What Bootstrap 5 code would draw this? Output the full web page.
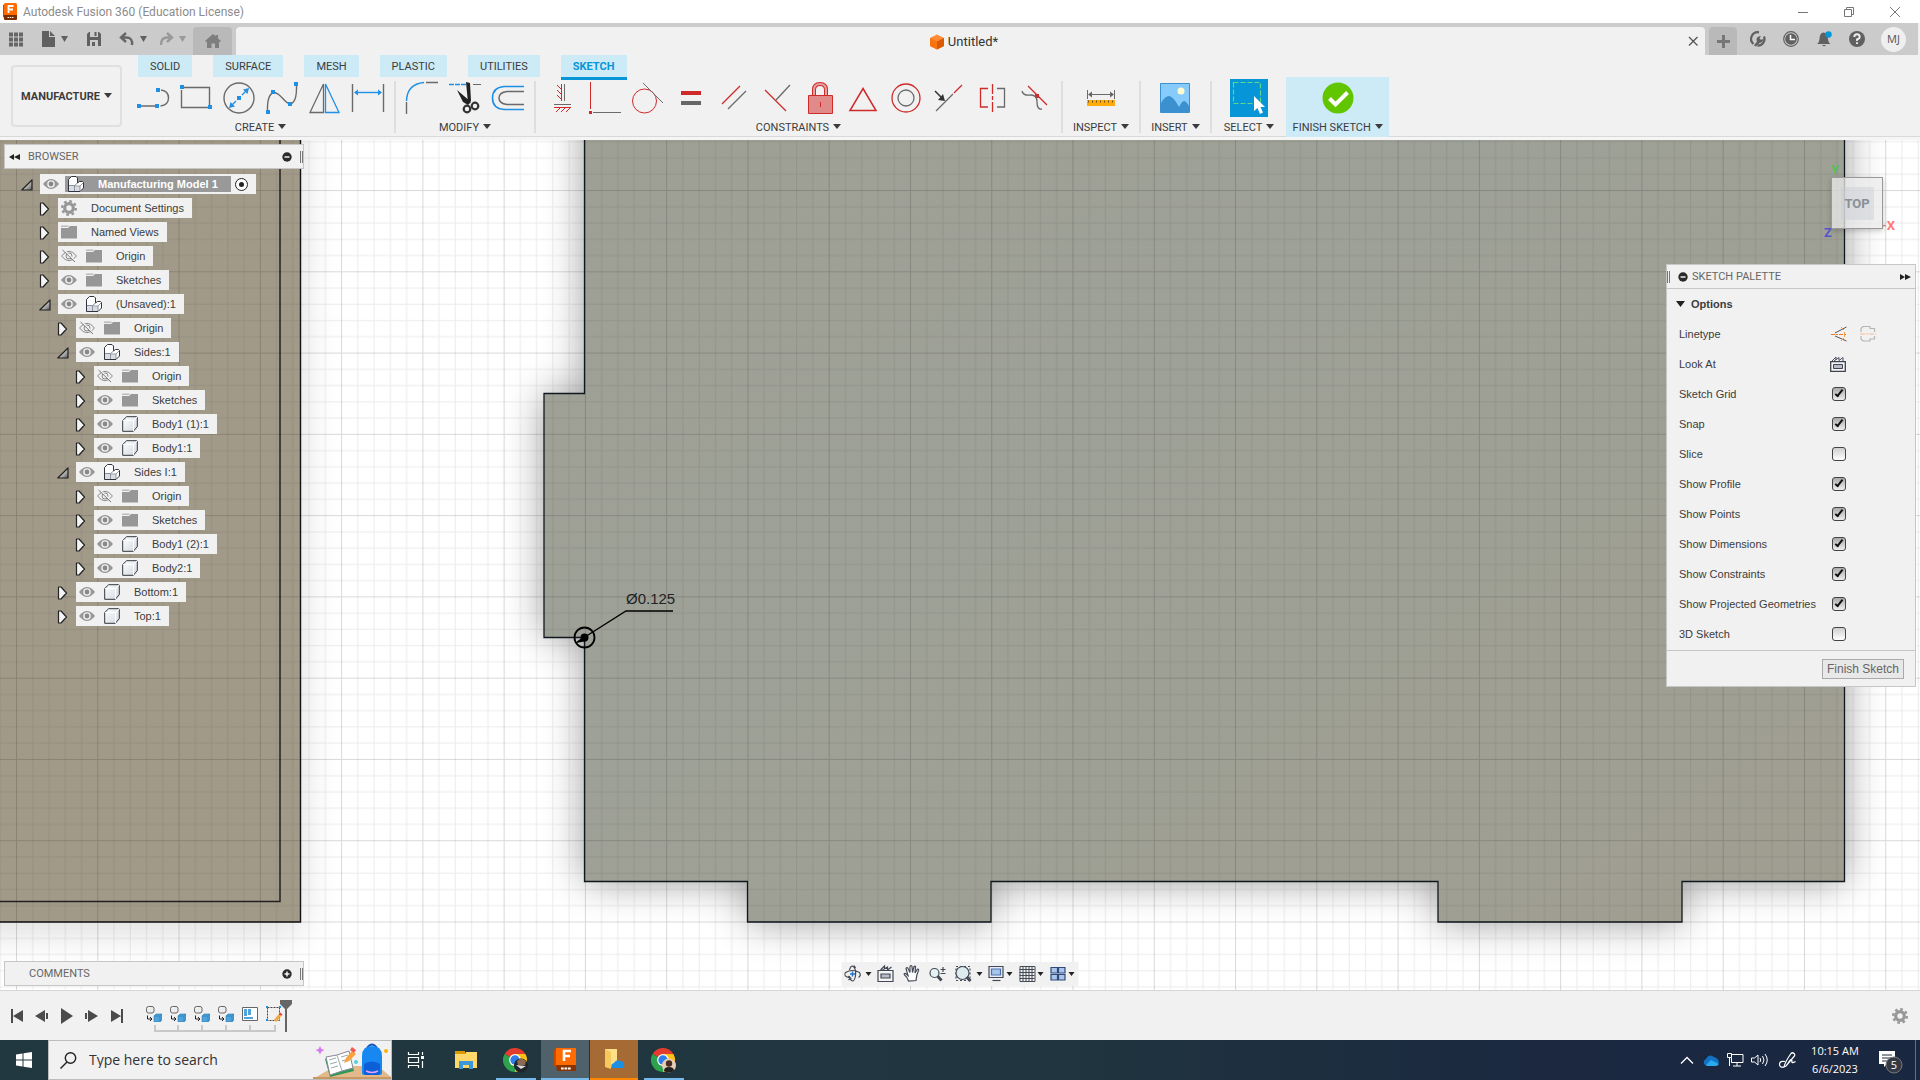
<!DOCTYPE html>
<html lang="en">
<head>
<meta charset="utf-8">
<meta name="viewport" content="width=device-width, initial-scale=1">
<title>Autodesk Fusion 360 (Education License)</title>
<link href="https://cdn.jsdelivr.net/npm/bootstrap@5.3.0/dist/css/bootstrap.min.css" rel="stylesheet">
<style>
  :root { --panel:#f1f1f1; --ink:#3c3c3c; --tint:#cdeaf7; --blue:#0696d7; --rule:#cbcbcb; }
  body { font-family:Roboto,"Liberation Sans",sans-serif; font-size:11px; line-height:16px; color:var(--ink); background:var(--panel); }
  svg { display:block; flex:none; overflow:visible; }
  button { background:none; border:0; padding:0; color:inherit; }
  .k { fill:none; stroke:#6a6a6a; } .b { fill:none; stroke:#1e90e6; } .r { fill:none; stroke:#cf2a2a; }
  .bf { fill:#1e90e6; } .rf { fill:#cf2a2a; }

  .titlebar { height:23px; background:#fff; color:#8c8c8c; font-size:12px; padding-left:3px; padding-right:2px; }
  .titlebar .apptitle { padding-left:5px; }
  .winbtn { width:46px; height:23px; }
  .tabbar { height:32px; background:var(--rule); margin-right:2px; color:#606060; }
  .quick { width:193px; }
  .hometab, .addtab { background:#b9b9b9; height:28px; border-radius:4px 4px 0 0; }
  .hometab { width:39px; } .addtab { width:28px; }
  .doctab { height:28px; background:var(--panel); border-radius:4px 4px 0 0; font-size:13px; color:#333; padding-top:1px; }
  .roundbtn { width:33px; height:32px; }
  .avatar { width:25px; height:25px; border-radius:50%; background:#efefef; color:#555; font-family:"Open Sans",sans-serif; font-size:11px; }

  .ribbon { height:82px; border-bottom:1px solid #d9d9d9; }
  .workspace { width:111px; height:62px; margin:10px 15px 0 11px; padding-top:1px; border:2px solid #e0e0e0; border-radius:4px; font-size:11px; font-weight:700; }
  .rtabs { gap:21px; height:22px; padding-left:1px; }
  .rtab { background:var(--tint); height:22px; padding:0 12px; color:var(--ink); text-decoration:none; line-height:23px; }
  .rtab.on { height:25px; color:var(--blue); font-weight:700; border-bottom:3px solid var(--blue); }
  .tgroup { height:59px; padding:0 10px; }
  .tgroup.wide { padding:0 12px; }
  .tools { height:42px; gap:11px; }
  .glabel { display:block; line-height:18px; text-align:center; }
  .divide { border-right:2px solid #dedede; height:52px; margin-top:4px; }
  .caret { display:inline-block; border:4px solid transparent; border-top:5px solid currentColor; border-bottom:0; margin-left:4px; vertical-align:2px; }
  .finish { width:103px; background:var(--tint); }

  .stage { background:#fff; border-top:3px solid #f5f5f5; border-bottom:1px solid #d6d6d6; }
  .pane { background:var(--panel); border:1px solid #c6c6c6; }
  .bar { height:25px; width:300px; color:#666; font-size:11px; }
  .leftdock { top:4px; left:4px; }
  .grip { width:3px; height:12px; border-left:1px solid #777; border-right:1px solid #777; }

  .tree { font-family:"Liberation Sans",sans-serif; font-size:11px; margin:5px 0 0 17px; }
  .tree ul { padding-left:18px; list-style:none; margin:0; }
  .tree .line { height:24px; gap:7px; }
  .node { background:var(--panel); height:20px; padding:0 8px 0 3px; gap:9px; }
  .node .cap { padding-left:5px; }
  .node .pick { background:#999; height:16px; color:#fff; font-weight:700; gap:14px; padding:0 13px 0 3px; margin-left:-3px; margin-right:-5px; }

  .cube { top:37px; right:37px; width:52px; height:52px; background:rgba(235,235,235,.75); border:1px solid #999; color:#8a8f94; font:700 13px/16px Roboto,sans-serif; box-shadow:0 2px 5px rgba(0,0,0,.2); padding-top:1px; }
  .cube .face { width:33px; height:33px; background:rgba(200,205,212,.45); }
  .axis { font:700 13px/14px Roboto,sans-serif; }
  .axis-y { top:23px; right:81px; color:#54c254; } .axis-z { top:86px; right:88px; color:#5454cc; } .axis-x { top:79px; right:25px; color:#f77; }

  .palette { top:124px; right:4px; width:250px; font-family:"Liberation Sans",sans-serif; border-width:1px; }
  .palette .bar { width:auto; height:24px; border-bottom:1px solid #c6c6c6; font-family:Roboto,sans-serif; }
  .phead { height:30px; padding-left:9px; gap:6px; }
  .opt { height:30px; padding-left:12px; padding-right:69px; }
  .opt.pair { padding-right:39px; }
  .opt input { appearance:none; width:14px; height:14px; margin:0; border:1px solid #444; border-radius:3px; background:linear-gradient(#cfcfcf,#fff); position:relative; }
  .opt input:checked { background:linear-gradient(#aaa,#eee); }
  .opt input:checked::after { content:""; position:absolute; left:4px; top:0; width:4px; height:9px; border:solid #111; border-width:0 2px 2px 0; transform:rotate(38deg); }
  .pfoot { border-top:1px solid #c6c6c6; height:36px; margin-top:1px; padding-right:11px; padding-top:1px; }
  .pbtn { border:1px solid #aaa; background:#e8e8e8; height:20px; width:82px; color:#666; font-size:12px; line-height:18px; }

  .navbarbox { bottom:4px; background:var(--panel); height:24px; width:237px; padding:0 3px; }
  .timeline { height:49px; }
  .play button { width:25px; height:24px; }
  .taskbar { height:40px; background:linear-gradient(90deg,#213840,#20353f 55%,#1b2840 80%,#1a2740); color:#fff; font-family:"Open Sans",sans-serif; }
  .start { width:48px; }
  .search { width:344px; background:var(--panel); border:1px solid #bdbdbd; padding-left:11px; }
  .search input { border:0; background:none; outline:0; font-size:14px; color:#333; width:180px; padding:0; }
  .search input::placeholder { color:#333; opacity:1; }
  .app { width:48px; height:40px; margin-left:1px; }
  .app.apart { margin-left:2px; }
  .app.first { margin-left:0; }
  .app.run { background:linear-gradient(#76b9ed,#76b9ed) center bottom/40px 2px no-repeat; }
  .app.active { background:#4f626b; border-bottom:2px solid #76b9ed; }
  .app.alert-tile { background:#a66a35; border-bottom:2px solid #f80; }
  .tray button { width:24px; height:40px; }
  .tray .notes { width:26px; margin-left:6px; margin-right:12px; }
  .clock { width:72px; font-size:11px; line-height:18px; }
  .edge { width:5px; border-left:1px solid #68717f; }
</style>
<script src="https://cdn.jsdelivr.net/npm/bootstrap@5.3.0/dist/js/bootstrap.bundle.min.js"></script>
</head>
<body class="vh-100 d-flex flex-column overflow-hidden">

<svg width="0" height="0" class="position-absolute" aria-hidden="true">
  <defs>
    <linearGradient id="gTri" x1="0" y1="0" x2="1" y2="1"><stop offset=".4" stop-color="#ddd"/><stop offset="1" stop-color="#555"/></linearGradient>
    <linearGradient id="gBox" x1="0" y1="0" x2="1" y2="1"><stop offset="0" stop-color="#fff"/><stop offset="1" stop-color="#d4d7de"/></linearGradient>
    <symbol id="eye" viewBox="0 0 16 16"><path d="M0 8Q8-2 16 8Q8 18 0 8z" fill="#979797"/><circle cx="8" cy="8" r="3.8" fill="#f1f1f1"/><circle cx="8" cy="8" r="2.4" fill="#888"/></symbol>
    <symbol id="eyeoff" viewBox="0 0 16 16"><path d="M.5 8Q8-1.500 15.500 8Q8 17.500 .5 8z" fill="none" stroke="#888"/><circle cx="8" cy="8" r="3" fill="none" stroke="#888"/><path d="M2.500 1.500l12 12" stroke="#f1f1f1" stroke-width="1.500"/><path d="M1.500 2l12.500 12" stroke="#777"/></symbol>
    <symbol id="folder" viewBox="0 0 16 16"><path d="M0 1.500h8l-1 1.500H0z" fill="#bbb"/><path d="M0 4h7l2-2h7v12.500H0z" fill="#979797"/></symbol>
    <symbol id="comp" viewBox="0 0 16 16"><path d="M.5 3.500L3.500.5H8L9.500 2v5L11.500 5.500h3l1 1v5.500l-3.500 3.500H.5z" fill="#fff" stroke="#2f3540" stroke-linejoin="round"/><path d="M1 9h5.500v6H1zM7 10.500h5V15H7z" fill="#d9dce3"/><path d="M6.500 15V9.500L9.500 7M1 9.500h5.500M6.500 10h5.500v5M12 10l3-3" fill="none" stroke="#777e8b" stroke-width=".8"/></symbol>
    <symbol id="body" viewBox="0 0 16 16"><path d="M.7 4.500l4-3.800h9.600q1 0 1 1v9l-4 4.600H.7z" fill="url(#gBox)" stroke="#2f3540" stroke-linejoin="round"/><path d="M11.500 15V4.500L15 1M1 4.500h10.500" fill="none" stroke="#fff"/></symbol>
    <symbol id="gear" viewBox="0 0 16 16"><circle cx="8" cy="8" r="4.300" fill="none" stroke="#979797" stroke-width="3.200"/><circle cx="8" cy="8" r="6.800" fill="none" stroke="#979797" stroke-width="2.400" stroke-dasharray="2.670 2.670"/></symbol>
    <symbol id="shut" viewBox="0 0 12 14"><path d="M1.500 1v12h2.500l5.500-6-5.500-6z" fill="#f4f4f4" stroke="#222" stroke-width="1.200" stroke-linejoin="round"/></symbol>
    <symbol id="open" viewBox="0 0 12 14"><path d="M11 2v10H.8z" fill="url(#gTri)" stroke="#222" stroke-width="1.200" stroke-linejoin="round"/></symbol>
    <symbol id="lookat" viewBox="0 0 16 16"><path d="M2 5l4-4v3M4 5l5-3.500v3l4-3V5" fill="none" stroke="#4a4f5c"/><path d="M.7 5.700h14.600v9.600H.7z" fill="#f6f6f6" stroke="#3f4450" stroke-width="1.300"/><path d="M3.500 8.500h9v4h-9z" fill="#b8bcc8" stroke="#3f4450"/></symbol>
    <symbol id="feat" viewBox="0 0 16 16"><path d="M.5 2.500Q.5.500 2.500.5H6q2 0 2 2V5q0 2-2 2H2.500q-2 0-2-2z" fill="#eee" stroke="#666"/><path d="M1.500 9.500v3.500H6M4 11l2 2-2 2" fill="none" stroke="#222"/><path d="M8 10l2-2h6v6l-2 2H8z" fill="#4ea3dc" stroke="#2a7bb5" stroke-width=".6"/><path d="M8 10h6v6M14 10l2-2" fill="none" stroke="#2a7bb5" stroke-width=".6"/></symbol>
    <symbol id="chrome" viewBox="0 0 24 24"><path d="M12 12L1.600 6A12 12 0 0 1 22.400 6z" fill="#e33b2e"/><path d="M12 12L22.400 6A12 12 0 0 1 12 24z" fill="#fbc116"/><path d="M12 12v12A12 12 0 0 1 1.600 6z" fill="#2da14b"/><path d="M12 6h10.400l-4 6z" fill="#fbc116"/><circle cx="12" cy="12" r="5.900" fill="#fff"/><circle cx="12" cy="12" r="4.700" fill="#2e7de9"/></symbol>
    <symbol id="minus" viewBox="0 0 10 10"><circle cx="5" cy="5" r="4.700" fill="#2b2b2b"/><path d="M2.500 5h5" stroke="#fff" stroke-width="1.400"/></symbol>
  </defs>
</svg>

<header>
  <div class="titlebar d-flex align-items-center">
    <svg width="15" height="18" viewBox="0 0 15 18"><path d="M0 2l3-2v16l-3-2z" fill="#c94a00"/><rect x="1" width="13" height="14" rx="1.500" fill="#ff6b00"/><path d="M1 12h13v4q0 1-1 1H2q-1 0-1-1z" fill="#7a2d00"/><path d="M5.500 10V3h5M5.500 6.500H10" fill="none" stroke="#fff" stroke-width="1.800"/><path d="M4.500 14.500h6" stroke="#fff" stroke-dasharray="1.500 .7"/></svg>
    <span class="apptitle flex-grow-1">Autodesk Fusion 360 (Education License)</span>
    <button class="winbtn d-flex align-items-center justify-content-center" aria-label="Minimize"><svg width="10" height="10"><path d="M0 5.500h10" stroke="#777"/></svg></button>
    <button class="winbtn d-flex align-items-center justify-content-center" aria-label="Restore"><svg width="10" height="10"><path d="M.5 2.500h7v7h-7zM2.500 2.500v-2h7v7h-2" fill="none" stroke="#777"/></svg></button>
    <button class="winbtn d-flex align-items-center justify-content-center" aria-label="Close"><svg width="10" height="10"><path d="M0 0l10 10M10 0L0 10" stroke="#777"/></svg></button>
  </div>

  <div class="tabbar d-flex align-items-end">
    <div class="quick">
      <svg width="193" height="32" viewBox="0 23 193 32" role="img" aria-label="Data panel, File, Save, Undo, Redo">
        <path d="M9 34.500h14M9 39.500h14M9 44.500h14" stroke="#666" stroke-width="4" stroke-dasharray="4 1"/>
        <path d="M42 31h7v6h6v10H42zM50 31l5 5h-5z" fill="#606060"/><path d="M61 36h7l-3.500 6z" fill="#606060"/>
        <path d="M87 34l2-2h10l2 2v12H87z" fill="#606060"/><path d="M90 32h8v5h-8zM90 40h8v6h-8z" fill="#cbcbcb"/><path d="M94.500 32h2v4h-2zM92 42h3v4h-3z" fill="#606060"/>
        <path d="M126 33l-5 4.500 5 4.500M121 37.500h5q7 0 6 7.500" fill="none" stroke="#666" stroke-width="2.400"/><path d="M140 36h7l-3.500 6z" fill="#606060"/>
        <path d="M167 33l5 4.500-5 4.500M172 37.500h-5q-6 0-6 7.500" fill="none" stroke="#999" stroke-width="2.400"/><path d="M179 36h7l-3.500 6z" fill="#999"/>
      </svg>
    </div>
    <button class="hometab d-flex align-items-center justify-content-center me-1" aria-label="Home"><svg width="16" height="14"><path d="M0 7l8-7 2.500 2.300V1H13v3.500L16 7l-1 1-1-.6V14h-4V9.500H6.500V14H2V7.400L1 8z" fill="#7e7e7e"/></svg></button>
    <div class="doctab flex-grow-1 d-flex align-items-center me-1">
      <div class="flex-grow-1 d-flex justify-content-center align-items-center gap-1 ps-2">
        <svg width="14" height="16" viewBox="0 0 14 15"><path d="M7 0l7 3.500v8L7 15l-7-3.500v-8z" fill="#ff8a36"/><path d="M0 3.500L7 7v8l-7-3.500z" fill="#f9730f"/><path d="M14 3.500L7 7v8l7-3.500z" fill="#d95a00"/></svg>
        <span>Untitled*</span>
      </div>
      <button class="px-1" aria-label="Close tab"><svg width="13" height="9"><path d="M1 0l8.500 8.500M9.500 0L1 8.500" stroke="#555" stroke-width="1.300"/></svg></button>
    </div>
    <button class="addtab d-flex align-items-center justify-content-center" aria-label="New tab"><svg width="13" height="13"><path d="M6.500 0v13M0 6.500h13" stroke="#777" stroke-width="3"/></svg></button>
    <div class="d-flex align-items-center ps-1">
      <button class="roundbtn d-flex align-items-center justify-content-center" aria-label="Extensions"><svg width="16" height="16"><path d="M3.500 13A6.700 6.700 0 0 1 9 1.300M14 5.500A6.700 6.700 0 0 1 7.500 14.700" fill="none" stroke="#606060" stroke-width="2.200"/><path d="M4 14.500L7 10.500Q5.500 7 8.500 5.500L11 5 9.500 7.200 10.800 8.700 13.500 8Q13 11.500 9.500 12L6 15.500z" fill="#606060"/></svg></button>
      <button class="roundbtn d-flex align-items-center justify-content-center" aria-label="Job status"><svg width="16" height="16"><circle cx="8" cy="8" r="7.300" fill="none" stroke="#606060" stroke-width="1.200"/><circle cx="8" cy="8" r="5.800" fill="#606060"/><path d="M7.500 4v4.500H12" fill="none" stroke="#fff" stroke-width="1.500"/></svg></button>
      <button class="roundbtn d-flex align-items-center justify-content-center" aria-label="Notifications"><svg width="16" height="16"><path d="M1 13q2-1 2.500-5 0-6 4-6.500Q12 2 12 8q.5 4 2.500 5zM6 14h4q-2 2.500-4 0z" fill="#606060"/><circle cx="12.500" cy="3.500" r="3.200" fill="#0696d7"/></svg></button>
      <button class="roundbtn d-flex align-items-center justify-content-center" aria-label="Help"><svg width="16" height="16"><circle cx="8" cy="8" r="8" fill="#606060"/><path d="M5.300 6q0-2.700 2.700-2.700T10.700 6Q10.700 7.500 8 8.500V10M8 11.300v1.800" fill="none" stroke="#eee" stroke-width="1.900"/></svg></button>
      <button class="avatar ms-2 me-2 d-flex align-items-center justify-content-center" aria-label="Account">MJ</button>
      <span class="pe-1"></span>
    </div>
  </div>

  <div class="ribbon d-flex">
    <button class="workspace flex-shrink-0">MANUFACTURE<span class="caret"></span></button>
    <div class="flex-grow-1">
      <nav class="rtabs d-flex align-items-start">
        <a class="rtab" href="#">SOLID</a><a class="rtab" href="#">SURFACE</a><a class="rtab" href="#">MESH</a><a class="rtab" href="#">PLASTIC</a><a class="rtab" href="#">UTILITIES</a><a class="rtab on" href="#">SKETCH</a>
      </nav>
      <div class="d-flex">
        <div class="tgroup ps-0">
          <div class="tools d-flex align-items-center">
            <button aria-label="Line"><svg width="32" height="32" viewBox="137 82 32 32"><path class="k" stroke-width="1.400" d="M141 106h14M161 90q7.500 1 7.500 8t-8 8"/><path class="bf" d="M137 104h4v4h-4zM155 104h4v4h-4zM156 88h4v4h-4z"/></svg></button>
            <button aria-label="Rectangle"><svg width="32" height="32" viewBox="180 82 32 32"><path class="k" stroke-width="1.400" d="M181.500 90v17.500h27M184 87.500h25.500v18"/><path class="bf" d="M180 85h4v4h-4zM208 105h4v4h-4z"/></svg></button>
            <button aria-label="Circle"><svg width="32" height="32" viewBox="223 82 32 32"><circle class="k" stroke-width="1.400" cx="239" cy="98" r="15"/><path class="b" stroke-width="1.400" d="M231 106l5-5M242 95l5-5"/><path class="bf" d="M229 108l1.500-6 4.500 4.500zM249 88l-1.500 6-4.500-4.500zM237 96h4v4h-4z"/></svg></button>
            <button aria-label="Spline"><svg width="32" height="32" viewBox="266 82 32 32"><path class="k" stroke-width="1.400" d="M267.500 111Q267 94 274 92.500C281 93 284 103 290 104Q297 103 296.500 85"/><path class="bf" d="M266 110h4v4h-4zM271 90h4v4h-4zM288 102h4v4h-4zM294 82h4v4h-4z"/></svg></button>
            <button aria-label="Mirror"><svg width="32" height="32" viewBox="309 82 32 32"><path class="k" stroke-width="1.300" d="M323.500 84v28.500h-13.500z"/><path class="b" stroke-width="1.300" d="M325.500 84v28.500H339z"/></svg></button>
            <button aria-label="Dimension"><svg width="32" height="32" viewBox="352 82 32 32"><path class="k" stroke-width="1.400" d="M352.500 84v28M383.500 84v28"/><path class="b" stroke-width="1.400" d="M357 92.500h22"/><path class="bf" d="M354 92.500l4-3v6zM382 92.500l-4-3v6z"/></svg></button>
          </div>
          <span class="glabel">CREATE<span class="caret"></span></span>
        </div>
        <div class="divide"></div>
        <div class="tgroup">
          <div class="tools d-flex align-items-center">
            <button aria-label="Fillet"><svg width="32" height="32" viewBox="406 82 32 32"><path class="k" stroke-width="1.400" d="M406.500 102v12M426 82.500h12"/><path class="b" stroke-width="1.400" d="M406.500 101Q407 84 424 82.500"/></svg></button>
            <button aria-label="Trim"><svg width="32" height="32" viewBox="449 82 32 32"><path class="b" stroke-width="1.400" stroke-dasharray="5 1" d="M449 84.500h17"/><path class="k" d="M473 84.500h8"/><path d="M466 82l4 1 1 18-3 2zM457 90l14 12-3 3-5-3z" fill="#222"/><circle cx="467" cy="109" r="3.300" fill="none" stroke="#333" stroke-width="2.200"/><circle cx="475" cy="106" r="3.300" fill="none" stroke="#333" stroke-width="2.200"/></svg></button>
            <button aria-label="Offset"><svg width="32" height="32" viewBox="492 82 32 32"><path class="b" stroke-width="1.600" d="M524 86.500h-20q-11.500 1-11.500 11.500T504 109.500h20"/><path class="k" stroke-width="1.500" d="M524 91.500h-17q-8 1-8 6.500t8 6.500h17"/></svg></button>
          </div>
          <span class="glabel">MODIFY<span class="caret"></span></span>
        </div>
        <div class="divide"></div>
        <div class="tgroup">
          <div class="tools d-flex align-items-center">
            <button aria-label="Horizontal/Vertical"><svg width="32" height="32" viewBox="545 82 32 32"><path class="r" d="M560.500 84v17M560 89l-4-4M560 94l-4-4M560 99l-4-4M553 107.500h17M559 108l-4 4M564 108l-4 4M569 108l-4 4"/><path class="k" d="M563.500 84v17M553 104.500h17"/></svg></button>
            <button aria-label="Coincident"><svg width="32" height="32" viewBox="589 82 32 32"><path class="r" d="M590.500 82v27"/><path class="rf" d="M589 111h3v3h-3z"/><path class="k" d="M593 112.500h28"/></svg></button>
            <button aria-label="Tangent"><svg width="32" height="32" viewBox="632 82 32 32"><circle class="r" cx="644.500" cy="101" r="12"/><path class="k" d="M643 83l20 20"/></svg></button>
            <button aria-label="Equal"><svg width="32" height="32" viewBox="675 82 32 32"><path class="rf" d="M681 91h20v4h-20z"/><path d="M681 101h20v4h-20z" fill="#666"/></svg></button>
            <button aria-label="Parallel"><svg width="32" height="32" viewBox="718 82 32 32"><path class="r" stroke-width="1.300" d="M722 104l18-18"/><path class="k" stroke-width="1.300" d="M728 109l18-18"/></svg></button>
            <button aria-label="Perpendicular"><svg width="32" height="32" viewBox="760 82 32 32"><path class="r" stroke-width="1.300" d="M764 90l21 21"/><path class="k" stroke-width="1.300" d="M775 100l14-15"/></svg></button>
            <button aria-label="Fix"><svg width="32" height="32" viewBox="803 82 32 32"><path d="M813 96v-6q0-6 6-6t6 6v6" fill="none" stroke="#cf2a2a" stroke-width="4"/><path d="M813 96v-6q0-6 6-6t6 6v6" fill="none" stroke="#e8a0a0" stroke-width="2"/><path d="M807.500 95.500h24v18h-24z" fill="#e08a8a" stroke="#cf2a2a"/><path class="r" d="M819.500 102v5"/></svg></button>
            <button aria-label="Midpoint"><svg width="32" height="32" viewBox="847 82 32 32"><path class="r" stroke-width="1.500" d="M863 88.500l13 22h-26z"/></svg></button>
            <button aria-label="Concentric"><svg width="32" height="32" viewBox="890 82 32 32"><circle class="r" stroke-width="1.300" cx="906" cy="98" r="14"/><circle class="k" stroke-width="1.300" cx="906" cy="98" r="8"/></svg></button>
            <button aria-label="Collinear"><svg width="32" height="32" viewBox="933 82 32 32"><path class="k" stroke-width="1.300" d="M936 111l17-17"/><path class="r" stroke-width="1.300" d="M954 93l8-8"/><path d="M935 91l7 7" stroke="#333" stroke-width="1.500"/><path d="M945 101l-7-1 5-6z" fill="#333"/></svg></button>
            <button aria-label="Symmetry"><svg width="32" height="32" viewBox="975 82 32 32"><path class="r" stroke-width="1.300" d="M987 88.500h-7.500v18.500h7.500M991.500 84v10M991.500 96v4M991.500 102v10"/><path class="k" stroke-width="1.300" d="M996 88.500h7.500v18.500H996"/></svg></button>
            <button aria-label="Curvature"><svg width="32" height="32" viewBox="1019 82 32 32"><path class="r" stroke-width="1.300" d="M1028 86l19 19"/><path class="rf" d="M1035 94h4v4h-4z"/><path class="k" stroke-width="1.300" d="M1022 91q1 5 9 4 6 0 6 7 0 8 5 7"/></svg></button>
          </div>
          <span class="glabel">CONSTRAINTS<span class="caret"></span></span>
        </div>
        <div class="divide"></div>
        <div class="tgroup">
          <div class="tools d-flex align-items-center justify-content-center"><button aria-label="Measure"><svg width="28" height="32" viewBox="1087 82 28 32"><path class="k" d="M1087.500 90v9M1114.500 90v9M1090 94.500h22"/><path d="M1088 94.500l4-3v6zM1114 94.500l-4-3v6z" fill="#666"/><path d="M1087 100h28v6h-28z" fill="#ffab0a"/><path d="M1088 101.500h27" stroke="#6a5020" stroke-width="2" stroke-dasharray="1 3"/></svg></button></div>
          <span class="glabel">INSPECT<span class="caret"></span></span>
        </div>
        <div class="divide"></div>
        <div class="tgroup">
          <div class="tools d-flex align-items-center justify-content-center"><button aria-label="Insert image"><svg width="30" height="30"><path d="M.5.5h29v29H.5z" fill="#86cbfb" stroke="#3b90cf"/><path d="M1 20q4-7 8-7t10 11q3-6 5-6t5 5v6H1z" fill="#3b90cf"/><circle cx="21" cy="8" r="3.500" fill="#fffcd0"/></svg></button></div>
          <span class="glabel">INSERT<span class="caret"></span></span>
        </div>
        <div class="divide"></div>
        <div class="tgroup wide">
          <div class="tools d-flex align-items-center justify-content-center"><button aria-label="Select"><svg width="38" height="38"><path d="M0 0h38v38H0z" fill="#0696d7"/><path d="M3.500 3.500h27v21h-27z" fill="none" stroke="#5fd68a" stroke-width="1.200" stroke-dasharray="5 2"/><path d="M24 17v15l3.500-3 2.500 6 3-1.500-2.500-5.500H35z" fill="#fff"/></svg></button></div>
          <span class="glabel">SELECT<span class="caret"></span></span>
        </div>
        <button class="finish d-block">
          <span class="tools d-flex align-items-center justify-content-center"><svg width="32" height="32"><circle cx="16" cy="16" r="15.500" fill="#61c600"/><path d="M7.500 16.500l6 6 12-12" fill="none" stroke="#fff" stroke-width="4"/></svg></span>
          <span class="glabel">FINISH SKETCH<span class="caret"></span></span>
        </button>
      </div>
    </div>
  </div>
</header>

<main class="stage flex-grow-1 position-relative overflow-hidden">
  <svg class="position-absolute top-0 start-0 w-100 h-100" role="img" aria-label="Sketch canvas">
    <defs>
      <filter id="soft" x="-20%" y="-20%" width="140%" height="140%"><feGaussianBlur stdDeviation="20"/></filter>
      <linearGradient id="gBody" x1="0" y1="0" x2="1" y2="1"><stop offset="0" stop-color="#9f9f94"/><stop offset=".4" stop-color="#9ea197"/><stop offset="1" stop-color="#a09e91"/></linearGradient>
      <pattern id="grid" width="81.270" height="81.270" patternUnits="userSpaceOnUse" x="16" y="27.500">
        <path d="M16.750 0v81.270M33 0v81.270M49.260 0v81.270M65.520 0v81.270M0 16.750h81.270M0 33h81.270M0 49.260h81.270M0 65.520h81.270" stroke="#000" stroke-opacity=".075"/>
        <path d="M.5 0v81.270M0 .5h81.270" stroke="#000" stroke-opacity=".15"/>
      </pattern>
    </defs>
    <g transform="translate(0 -140)">
      <path d="M-40 100H301v822H-40z" transform="translate(0 10)" fill="#000" opacity=".14" filter="url(#soft)"/>
      <path d="M584.500 60V393.500H544V637.500H584.500V881.500H747.500V922H991V881.500H1438V922H1682V881.500H1844.500V60z" fill="#000" opacity=".4" filter="url(#soft)"/>
      <path d="M-4 100H300.500V922H-4z" fill="#a29a89" stroke="#111" stroke-width="1.400"/>
      <path d="M280 100V901.500H-4" fill="none" stroke="#222" stroke-width="1.500"/>
      <path d="M584.500 60V393.500H544V637.500H584.500V881.500H747.500V922H991V881.500H1438V922H1682V881.500H1844.500V60z" fill="url(#gBody)" stroke="#10181f" stroke-width="1.300"/>
      <rect x="0" y="100" width="100%" height="110%" fill="url(#grid)"/>
      <circle cx="584.500" cy="637.500" r="10" fill="none" stroke="#000" stroke-width="1.800"/>
      <circle cx="584.500" cy="637.500" r="4" fill="#000"/>
      <path d="M577 642L626 611H673" fill="none" stroke="#000" stroke-width="1.300"/>
      <path d="M576 643l8-7 3 5z"/>
      <text x="626" y="604" font-family="Liberation Sans, sans-serif" font-size="15" fill="#222">Ø0.125</text>
    </g>
  </svg>

  <span class="axis axis-y position-absolute">Y</span>
  <span class="axis axis-x position-absolute">-X</span>
  <div class="cube position-absolute d-flex align-items-center justify-content-center"><div class="face d-flex align-items-center justify-content-center">TOP</div></div>
  <span class="axis axis-z position-absolute">Z</span>

  <aside class="leftdock position-absolute">
    <div class="pane bar d-flex align-items-center ps-1">
      <svg width="11" height="6"><path d="M5 0v6L0 3zM11 0v6L5 3z" fill="#222"/></svg>
      <span class="flex-grow-1 ps-2">BROWSER</span>
      <svg class="me-2" width="10" height="10"><use href="#minus"/></svg><span class="grip"></span>
    </div>
    <div class="tree">
      <div class="line d-flex align-items-start">
        <svg class="mt-1" width="12" height="14"><use href="#open"/></svg>
        <div class="node d-flex align-items-center"><svg width="16" height="16"><use href="#eye"/></svg>
          <span class="pick d-flex align-items-center"><svg width="16" height="16"><use href="#comp"/></svg>Manufacturing Model 1</span>
          <svg width="13" height="13"><circle cx="6.500" cy="6.500" r="6" fill="#fff" stroke="#222"/><circle cx="6.500" cy="6.500" r="2.500" fill="#222"/></svg>
        </div>
      </div>
      <ul id="treeRoot"></ul>
    </div>
  </aside>

  <section class="pane palette position-absolute">
    <div class="bar d-flex align-items-center">
      <span class="grip me-2"></span><svg width="10" height="10"><use href="#minus"/></svg>
      <span class="ps-1 flex-grow-1">SKETCH PALETTE</span>
      <svg class="me-1" width="11" height="6"><path d="M0 0v6l5-3zM5 0v6l6-3z" fill="#222"/></svg>
    </div>
    <div class="phead fw-bold d-flex align-items-center"><svg width="9" height="6"><path d="M0 0h9L4.500 6z" fill="#222"/></svg>Options</div>
    <div class="opt pair d-flex align-items-center"><span class="flex-grow-1">Linetype</span>
      <button aria-label="Construction" class="me-2 pe-1"><svg width="17" height="16"><path d="M15.500 1L4 7M4 10l11.500 5" fill="none" stroke="#555"/><path d="M0 8.500h16" stroke="#f07820" stroke-width="1.200" stroke-dasharray="4 1 2 1"/><path d="M10 1l3 3M10 15l3-3M13.500 6v5" stroke="#f09a50" fill="none"/></svg></button>
      <button aria-label="Centerline"><svg width="16" height="16"><path d="M1 6V2.500L3 .5h7v2h4.500V6M1 10v3l2 2h7v-2h4.500v-3" fill="none" stroke="#b5b5b5" stroke-width="1.200"/><path d="M0 8h16" stroke="#f3bd98" stroke-dasharray="5 1 2 1"/></svg></button></div>
    <div class="opt d-flex align-items-center justify-content-between"><span>Look At</span><button aria-label="Look At"><svg width="16" height="16"><use href="#lookat"/></svg></button></div>
    <div class="opt d-flex align-items-center justify-content-between"><label for="o1">Sketch Grid</label><input id="o1" type="checkbox" checked></div>
    <div class="opt d-flex align-items-center justify-content-between"><label for="o2">Snap</label><input id="o2" type="checkbox" checked></div>
    <div class="opt d-flex align-items-center justify-content-between"><label for="o3">Slice</label><input id="o3" type="checkbox"></div>
    <div class="opt d-flex align-items-center justify-content-between"><label for="o4">Show Profile</label><input id="o4" type="checkbox" checked></div>
    <div class="opt d-flex align-items-center justify-content-between"><label for="o5">Show Points</label><input id="o5" type="checkbox" checked></div>
    <div class="opt d-flex align-items-center justify-content-between"><label for="o6">Show Dimensions</label><input id="o6" type="checkbox" checked></div>
    <div class="opt d-flex align-items-center justify-content-between"><label for="o7">Show Constraints</label><input id="o7" type="checkbox" checked></div>
    <div class="opt d-flex align-items-center justify-content-between"><label for="o8">Show Projected Geometries</label><input id="o8" type="checkbox" checked></div>
    <div class="opt d-flex align-items-center justify-content-between"><label for="o9">3D Sketch</label><input id="o9" type="checkbox"></div>
    <div class="pfoot d-flex align-items-center justify-content-end"><button class="pbtn">Finish Sketch</button></div>
  </section>

  <div class="pane bar position-absolute bottom-0 start-0 ms-1 mb-1 d-flex align-items-center">
    <span class="flex-grow-1 ps-4">COMMENTS</span>
    <svg class="me-2" width="10" height="10"><use href="#minus"/><path d="M5 2.500v5" stroke="#fff" stroke-width="1.400"/></svg><span class="grip"></span>
  </div>

  <div class="navbarbox position-absolute start-50 translate-middle-x d-flex align-items-center">
    <svg width="231" height="24" viewBox="844 962 231 24" role="img" aria-label="Orbit, Look At, Pan, Zoom, Fit, Display, Grid, Viewports">
      <g fill="none" stroke="#444a55" stroke-width="1.200">
        <path d="M858 977.500q3-2 1-5-7-4-14 0-3 4 5 5.500l-2-2M850 978l-2 2M849 970q1-4 3-4 4 2 3 10-1 5-3 5-3-1-3-5M855 968l-1.500-2.500"/><path d="M849.500 974h5M852 971.500v5" stroke="#2277cc" stroke-width="1.500"/>
        <path d="M880 970l4-4v3M882 970l5-3v3l4-3"/><path d="M877.500 970.500h15v11h-15z" fill="#f4f4f4"/><path d="M880.500 974h9v4h-9z" fill="#b8bcc8"/>
        <path d="M908 981q-1-4-4-6-1-2 1-1.500l2.500 2-2-7q1-2 2 0l2 4v-6q1-2 2 0l.5 6 1.500-6q1.500-1 1.500.5l-.5 6 2.500-4q1.500 0 1 1.500-2 4-2.500 10z" fill="#fff"/>
        <circle cx="934" cy="973" r="4.500" fill="#e5f1f3"/><path d="M937 976l4 4.500" stroke-width="3"/><path d="M940 969.500h5M942.500 967v5M940 973.500h5"/>
        <path d="M955.500 966.500h14v14h-14z" stroke-dasharray="2 2"/><circle cx="962" cy="973" r="6.500" fill="#dcebed"/><path d="M966 977l4 4" stroke-width="3"/>
        <path d="M988.500 966.500h14v11h-14z" fill="#e8edf8"/><path d="M991 969h9v6h-9z" fill="#a9c5ec" stroke="#4a72b0"/><path d="M992 980.500h8"/>
        <path d="M1019.500 966.500h15v15h-15zM1022.500 966v15M1025.500 966v15M1028.500 966v15M1031.500 966v15M1019 969.500h15M1019 972.500h15M1019 975.500h15M1019 978.500h15" stroke-width="1"/>
        <path d="M1050.500 967.500h6.500v5.500h-6.500zM1058 967.500h6.500v5.500H1058zM1050.500 974.500h6.500v5.500h-6.500zM1058 974.500h6.500v5.500H1058z" fill="#a9c5ec" stroke="#2f4a78"/>
      </g>
      <path d="M865 972h6l-3 4zM976 972h6l-3 4zM1006 972h6l-3 4zM1037 972h6l-3 4zM1068 972h6l-3 4z" fill="#222"/>
    </svg>
  </div>
</main>

<footer>
  <div class="timeline d-flex align-items-center justify-content-between">
    <div class="d-flex align-items-center">
      <div class="play d-flex ps-1">
        <button aria-label="Go to start"><svg class="m-auto" width="12" height="14"><path d="M0 0h2v14H0zM12 1v12L2 7z" fill="#4b4b4b"/></svg></button>
        <button aria-label="Step back"><svg class="m-auto" width="13" height="12"><path d="M10 0v12L0 6zM11 3h2v6h-2z" fill="#4b4b4b"/></svg></button>
        <button aria-label="Play"><svg class="m-auto" width="12" height="16"><path d="M0 0l12 8-12 8z" fill="#4b4b4b"/></svg></button>
        <button aria-label="Step forward"><svg class="m-auto" width="13" height="12"><path d="M3 0v12l10-6zM0 3h2v6H0z" fill="#4b4b4b"/></svg></button>
        <button aria-label="Go to end"><svg class="m-auto" width="12" height="14"><path d="M10 0h2v14h-2zM0 1v12l10-6z" fill="#4b4b4b"/></svg></button>
      </div>
      <svg class="ms-3" width="150" height="49" viewBox="145 991 150 49" role="img" aria-label="Timeline features">
        <path d="M155 1025v6h120v-6M178 1025v6M202 1025v6M226 1025v6M250 1025v6" fill="none" stroke="#c8c8c8" stroke-width="2"/>
        <use href="#feat" x="146" y="1006" width="16" height="16"/><use href="#feat" x="170" y="1006" width="16" height="16"/><use href="#feat" x="194" y="1006" width="16" height="16"/><use href="#feat" x="218" y="1006" width="16" height="16"/>
        <path d="M242.500 1007.500h15v13h-15z" fill="#fff" stroke="#666"/><path d="M244 1009h3v7h-3zM248 1009h3v6h-3zM244 1017h9v2h-9z" fill="#4ea3dc"/>
        <path d="M267.500 1007.500h12v13h-12z" fill="none" stroke="#444" stroke-dasharray="2 1"/><path class="bf" d="M266 1006h2v2h-2zM279 1006h2v2h-2zM266 1019h2v2h-2z"/><path d="M275 1021l5-6" stroke="#f2a83b" stroke-width="3"/><path d="M280 1015l1.500-1.500" stroke="#e54848" stroke-width="3"/>
        <path d="M280 1000h12v4l-5 5v23h-2v-23l-5-5z" fill="#666"/>
      </svg>
    </div>
    <button class="me-2 pe-1" aria-label="Timeline settings"><svg width="16" height="16"><use href="#gear"/></svg></button>
  </div>

  <div class="taskbar d-flex">
    <button class="start d-flex align-items-center justify-content-center" aria-label="Start"><svg width="16" height="16"><path d="M0 2.500l6.500-1v6H0zM7.500 1.300L16 0v7.500H7.500zM0 8.500h6.500v6l-6.500-1zM7.500 8.500H16V16l-8.500-1.300z" fill="#fff"/></svg></button>
    <div class="search d-flex align-items-center">
      <svg class="me-2" width="17" height="17"><circle cx="10.500" cy="6" r="5.200" fill="none" stroke="#222" stroke-width="1.400"/><path d="M7 10l-6.500 6.500" stroke="#222" stroke-width="1.400"/></svg>
      <input class="ms-1" type="text" placeholder="Type here to search" aria-label="Search">
      <svg class="ms-auto" width="78" height="38" viewBox="313 1041 78 38">
        <path d="M313 1079l22-13h43l13 11v2z" fill="#e2b98a"/><path d="M313 1077h78v2h-78z" fill="#c99763"/>
        <path d="M320 1046l1.500 3 3 1-3 1.500-1.500 3-1.500-3-3-1.500 3-1z" fill="#d678f0"/>
        <path d="M325 1059l24-6 5 18-24 6z" fill="#2f9a55"/><path d="M326 1057l11-2 12-4 4 17-11 3-12 4z" fill="#fff" stroke="#889"/><path d="M337 1055l5 16M329 1060l7-2M330 1064l7-2M331 1068l7-2M341 1057l7-2M342 1061l7-2" stroke="#9aa" fill="none"/>
        <path d="M344 1063l2-5 6-7 4 3-7 7z" fill="#f9a23c"/><path d="M350 1050l2-3 4 3-2 3z" fill="#ef5b50"/>
        <path d="M367 1048q5-7 10 0" fill="none" stroke="#1556b8" stroke-width="2"/><path d="M362 1056q0-10 10-10t10 10v17q0 2-2 2h-16q-2 0-2-2z" fill="#1788f2"/><path d="M364 1064q8-5 16 0v9q0 2-2 2h-12q-2 0-2-2z" fill="#0d5fd8"/><path d="M366 1071q6 3 12 0" stroke="#e0a0ff" fill="none" stroke-width="1.500"/>
        <circle cx="356" cy="1062" r="2" fill="#56cfe1"/><circle cx="386" cy="1051" r="2" fill="#ffb300"/>
      </svg>
    </div>
    <button class="app first d-flex align-items-center justify-content-center" aria-label="Task view"><svg width="16" height="16"><path d="M.5 0v2.500h10V0M.5 5.500h10v5H.5zM.5 16v-2.500h10V16M14.500 0v3M14.500 9v7" fill="none" stroke="#fff" stroke-width="1.200"/><path d="M13 4h3v3h-3z" fill="#fff"/></svg></button>
    <button class="app apart d-flex align-items-center justify-content-center" aria-label="File Explorer"><svg width="22" height="18"><path d="M0 0h10v5H0z" fill="#d99a00"/><path d="M0 3h10l1-2h11v16H0z" fill="#ffd869"/><path d="M4 10h14v8h-4v-4H8v4H4z" fill="#3b97d9"/></svg></button>
    <button class="app run apart d-flex align-items-center justify-content-center" aria-label="Chrome, profile 1"><svg width="26" height="26"><use href="#chrome" x="0" y="1" width="24" height="24"/><circle cx="18" cy="18.500" r="7" fill="#20242c"/><path d="M14 14l4-3 5 3-1 4h-7z" fill="#8a6a50"/><path d="M13 18l10 1-5 3z" fill="#ddd"/></svg></button>
    <button class="app active d-flex align-items-center justify-content-center" aria-label="Fusion 360"><svg width="22" height="24"><path d="M0 3l5-3v21l-5-2z" fill="#c94a00"/><path d="M2 1h20v17H2z" fill="#ff6b00"/><path d="M2 18h20v6H3z" fill="#8a3300"/><path d="M10 14V4h7M10 9h6" fill="none" stroke="#fff" stroke-width="2.600"/><path d="M7 21.500h10" stroke="#fff" stroke-width="2" stroke-dasharray="2.700 .8"/></svg></button>
    <button class="app alert-tile d-flex align-items-center justify-content-center" aria-label="Documents"><svg width="22" height="20"><path d="M2 0h12v18H2z" fill="#ffe08a"/><path d="M2 0l6 3v17l-6-2z" fill="#f6c95c"/><path d="M9 19q-2-4 2-5 2-4 6-2 4 0 3 3 2 1 1 4z" fill="#1a8fe3"/></svg></button>
    <button class="app run apart d-flex align-items-center justify-content-center" aria-label="Chrome, profile 2"><svg width="26" height="26"><use href="#chrome" x="0" y="1" width="24" height="24"/><circle cx="18" cy="18.500" r="7" fill="#e9cdb5"/><path d="M13 24q0-4 5-4t5 4q-5 3-10 0z" fill="#222"/><circle cx="18" cy="16.500" r="3.200" fill="#4a2e22"/></svg></button>
    <div class="tray ms-auto d-flex align-items-center">
      <button aria-label="Hidden icons"><svg class="m-auto" width="12" height="7"><path d="M0 6.500l6-6 6 6" fill="none" stroke="#fff" stroke-width="1.300"/></svg></button>
      <button aria-label="OneDrive"><svg class="m-auto" width="16" height="11"><path d="M2 10q-3-4 1-6 3-6 8-2 4 1 5 5-1 4-4 4H4z" fill="#1272c4"/><path d="M3 10l5-5 8 4q-1 2-4 2H4z" fill="#2ba8ef"/></svg></button>
      <button aria-label="Network"><svg class="m-auto" width="17" height="14"><path d="M5 1.500h11v8H4.500V5M10 10v3M6 13h8M.5.500h4v4h-4zM2.500 4v9" fill="none" stroke="#fff"/></svg></button>
      <button aria-label="Volume"><svg class="m-auto" width="17" height="14"><path d="M.5 5v4h3l3.500 3V2L3.500 5zM9 5q1.500 2 0 4M11.500 3q3 4 0 8M14 1q4.500 6 0 12" fill="none" stroke="#fff"/></svg></button>
      <button class="ms-1" aria-label="Ink workspace"><svg class="m-auto" width="17" height="16"><path d="M6 9.500q-5-1-5.500 2.500 0 4 4.500 3M5 15q1-5 7-13.500 1.500-1.500 3 0t0 3L7 14zM9 11q4-6 4-2-1 3 3.500.5" fill="none" stroke="#fff" stroke-width="1.200"/></svg></button>
      <div class="clock text-center">10:15 AM<br>6/6/2023</div>
      <button class="notes" aria-label="Notifications, 5 new"><svg class="mt-1" width="26" height="24"><path d="M2 1h16v13h-8l-3 3v-3H2z" fill="#fff"/><path d="M5 5h10M5 8h10M5 11h7" stroke="#1b2840"/><circle cx="17" cy="15" r="8" fill="#333a45" stroke="#777"/><text x="17" y="19" text-anchor="middle" font-size="11" fill="#fff">5</text></svg></button>
      <span class="edge h-100"></span>
    </div>
  </div>
</footer>

<script>
  // Browser tree: [label, icon, visibility ("eye", "eyeoff" or ""), expanded children]
  const parts = n => [["Origin","folder","eyeoff"],["Sketches","folder","eye"],["Body1 ("+n+"):1","body","eye"],["Body"+n+":1","body","eye"]];
  const model = [
    ["Document Settings","gear",""],["Named Views","folder",""],["Origin","folder","eyeoff"],["Sketches","folder","eye"],
    ["(Unsaved):1","comp","eye",[
      ["Origin","folder","eyeoff"],["Sides:1","comp","eye",parts(1)],["Sides I:1","comp","eye",parts(2)],
      ["Bottom:1","body","eye"],["Top:1","body","eye"]]]
  ];
  const icon = id => `<svg width="16" height="16"><use href="#${id}"/></svg>`;
  const build = rows => rows.map(([t,i,v,kids]) =>
    `<li><div class="line d-flex align-items-start"><svg class="mt-1" width="12" height="14"><use href="#${kids?"open":"shut"}"/></svg>
     <div class="node d-flex align-items-center">${v?icon(v):""}${icon(i)}<span class="cap">${t}</span></div></div>${kids?`<ul>${build(kids)}</ul>`:""}</li>`).join("");
  document.getElementById("treeRoot").innerHTML = build(model);
</script>
</body>
</html>
